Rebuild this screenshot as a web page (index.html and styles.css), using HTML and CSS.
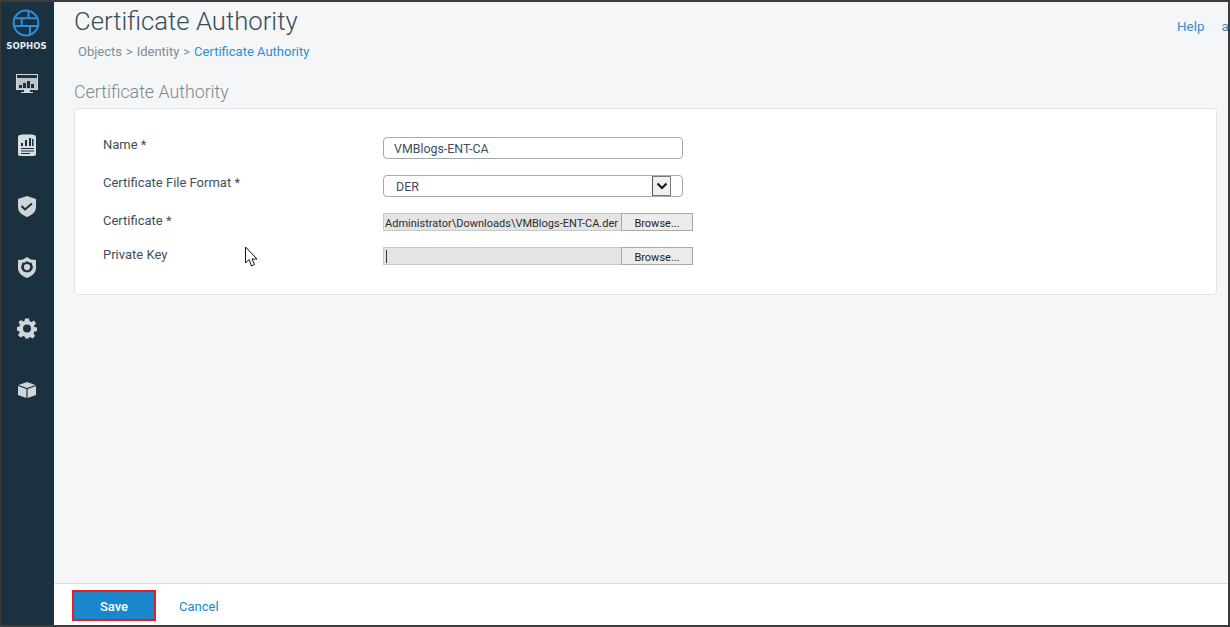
FILE: index.html
```html
<!DOCTYPE html>
<html lang="en">
<head>
<meta charset="utf-8">
<title>Certificate Authority</title>
<link rel="stylesheet" href="styles.css">
</head>
<body>
<div class="app">
  <nav class="sidebar">
    <div class="logo">
      <svg class="logo-mark" width="28" height="28" viewBox="0 0 28 28" fill="none" stroke="#2a8fd6" stroke-width="2">
        <circle cx="14" cy="14" r="12.4"/>
        <path d="M3.500 9.300H24.500M2.500 17H25.500M16.500 1.800V9.300M9.700 9.300V17M18 17V26"/>
      </svg>
      <span class="logo-text">SOPHOS</span>
    </div>
    <div class="nav-icon nav-monitor">
      <svg width="22" height="20" viewBox="0 0 22 20"><path fill="#d3d8dc" d="M0 0H22V16H0Z"/><path fill="#1a3240" d="M1 1H21V4H1Z"/><path fill="#bcc3c8" d="M1 4H21V15H1Z"/><path fill="#1a3240" d="M3 11h3v3H3zM7 9h3v5H7zM11 7h3v7h-3zM15 10h3v4h-3z"/><path fill="#d3d8dc" d="M8 16h6v2h3v1H5v-1h3z"/></svg>
    </div>
    <div class="nav-icon nav-report">
      <svg width="18" height="22" viewBox="0 0 18 22"><path fill="#7f8d96" d="M3 0H15V2H3Z"/><rect fill="#d9dde0" y="1" width="18" height="21" rx="2"/><path fill="#1a3240" d="M3 9h2v3H3zM7 6h2v6H7zM11 4h2v8h-2zM14 5h1.500v7H14zM3 14h13v1H3zM3 16.500h13v1H3zM3 19h9v1H3z"/></svg>
    </div>
    <div class="nav-icon nav-shield">
      <svg width="18" height="21" viewBox="0 0 18 21"><path fill="#cfd5d9" d="M9 0l9 3v8c0 5-4 8-9 10C4 19 0 16 0 11V3z"/><path fill="none" stroke="#1a3240" stroke-width="2" d="M3.500 10l3.500 3.500L14 7.500"/></svg>
    </div>
    <div class="nav-icon nav-protect">
      <svg width="18" height="21" viewBox="0 0 18 21"><path fill="#cfd5d9" d="M9 0l4 2.500 5 .5v8c0 5-4 8-9 10C4 19 0 16 0 11V3l5-.5z"/><path fill="#1a3240" fill-rule="evenodd" d="M9 4l2 1.500 2.500.3.800 2.200L15 10.500l-1 2.300-1.500 1.700L9 15.500l-3.500-1L4 12.800l-1-2.300.7-2.500.8-2.200L7 5.500zM9 7a3 3 0 1 0 0 6.200A3 3 0 0 0 9 7z"/></svg>
    </div>
    <div class="nav-icon nav-gear">
      <svg width="20" height="21" viewBox="0 0 20 20"><path fill="#cfd5d9" fill-rule="evenodd" d="M8 0h4l.6 2.800 1.900.8L17 2l2 3-2 2 .4 1.500L20 9v3.500l-2.600.6-.7 1.800L18 17.500 15.500 20l-2.300-1.600-1.300.6L11.500 20h-3l-.6-1.800-1.700-.6L3.500 19 1 16.500l1.700-2.300-.7-1.500L0 12V8.500l2.400-.6.600-1.700L1.500 3.500 4 1.500l2.200 1.600 1.300-.5zM10 6a4 4 0 1 0 0 8 4 4 0 0 0 0-8z"/></svg>
    </div>
    <div class="nav-icon nav-box">
      <svg width="18" height="16" viewBox="0 0 18 16"><path fill="#cfd5d9" d="M9 0l8.500 3L9 6 .5 3zM0 4l8.400 3v9L0 13zM18 4L9.600 7v9L18 13z"/></svg>
    </div>
  </nav>
  <main class="main">
    <div class="content">
      <header class="page-head">
        <div>
          <h1 class="page-title">Certificate Authority</h1>
          <div class="crumbs">Objects &gt; Identity &gt; <a class="crumb-current">Certificate Authority</a></div>
        </div>
        <div class="top-links"><a>Help</a><a>admin</a></div>
      </header>
      <h2 class="section-title">Certificate Authority</h2>
      <section class="card">
        <div class="row row-name">
          <label class="label">Name *</label>
          <div class="text-input">VMBlogs-ENT-CA</div>
        </div>
        <div class="row row-format">
          <label class="label">Certificate File Format *</label>
          <div class="select-input"><span>DER</span>
            <span class="select-arrow"><svg width="12" height="8" viewBox="0 0 12 8" fill="none" stroke="#111" stroke-width="2"><path d="M1.500 1.500L6 6l4.500-4.500"/></svg></span>
          </div>
        </div>
        <div class="row row-cert">
          <label class="label">Certificate *</label>
          <div class="file-input"><span class="file-path">Administrator\Downloads\VMBlogs-ENT-CA.der</span><span class="browse">Browse...</span></div>
        </div>
        <div class="row row-key">
          <label class="label">Private Key</label>
          <div class="file-input"><span class="file-path file-empty"><i class="caret"></i></span><span class="browse">Browse...</span></div>
        </div>
      </section>
      <svg class="cursor" width="14" height="22" viewBox="0 0 14 22"><path fill="#fff" stroke="#111" stroke-width="1" d="M1.500 1v16l3.500-3.500L7.500 20l3-1.500L8 13h5z"/></svg>
    </div>
    <footer class="footer">
      <button class="save" type="button">Save</button>
      <a class="cancel">Cancel</a>
    </footer>
  </main>
</div>
</body>
</html>
```
FILE: styles.css
```css
* { box-sizing: border-box; }
html, body { margin: 0; height: 100%; }
body { font-family: Roboto, "Liberation Sans", sans-serif; font-size: 13px; color: #3f4f5a; overflow: hidden; }
.app { display: flex; width: 1230px; height: 627px; border: solid #3c3c3c; border-width: 2px; border-left-width: 1px; background: #f4f6f8; position: relative; }
.sidebar { width: 53px; flex: none; background: #1a3240; display: flex; flex-direction: column; align-items: center; padding: 7px 1px 0 0; }
.logo { display: flex; flex-direction: column; align-items: center; height: 50px; margin-left: -1px; }
.logo-mark { display: block; margin-left: -1px; }
.logo-text { font-family: "DejaVu Sans", sans-serif; font-size: 8.500px; font-weight: 700; color: #e8ecef; margin-top: 4px; letter-spacing: 0.100px; line-height: 11px; }
.nav-icon { display: flex; justify-content: center; align-items: center; }
.nav-monitor { height: 20px; margin-top: 15px; }
.nav-report { height: 22px; margin-top: 40px; }
.nav-shield { height: 21px; margin-top: 40px; }
.nav-protect { height: 21px; margin-top: 40px; }
.nav-gear { height: 21px; margin-top: 40px; }
.nav-box { height: 16px; margin-top: 43px; }
.main { flex: 1; min-width: 0; display: flex; flex-direction: column; }
.content { flex: 1; position: relative; padding: 0 36px 0 20px; overflow: hidden; }
.page-head { display: flex; justify-content: space-between; height: 72px; }
.page-title { margin: 3px 0 0; font-size: 25.700px; font-weight: 300; line-height: 32px; color: #3b4d59; }
.crumbs { margin: 7px 0 0 4px; color: #808c95; line-height: 16px; word-spacing: 0.700px; }
.crumb-current { color: #2f8fd0; word-spacing: 0; }
.top-links { display: flex; gap: 17px; color: #2f8fd0; padding-top: 16px; width: 51px; margin-right: -36px; white-space: nowrap; overflow: hidden; flex: none; line-height: 18px; font-size: 13.400px; }
.section-title { margin: 7px 0 0; font-size: 17.800px; font-weight: 300; line-height: 22px; color: #7d8992; }
.card { margin-top: 5px; height: 187px; width: 1143px; background: #fff; border: 1px solid #e1e4e7; border-radius: 4px; padding: 28px 0 0 28px; position: relative; }
.row { display: flex; align-items: flex-start; }
.label { width: 280px; flex: none; color: #3f4f5a; line-height: 14px; margin-top: 1px; }
.text-input, .select-input { width: 300px; height: 22px; border: 1px solid #a4a9ad; border-radius: 4px; background: #fff; color: #3f4f5a; line-height: 22px; padding-left: 10px; font-size: 12.400px; }
.row-name { height: 38px; }
.row-format { height: 38px; }
.row-cert { height: 34px; }
.select-input { display: flex; justify-content: space-between; padding-left: 12px; padding-right: 11px; }
.select-arrow { width: 19px; height: 20px; border: 1px solid #7a7a7a; border-left-color: #555; background: #f0f0f0; display: flex; align-items: center; justify-content: center; }
.file-input { display: flex; width: 310px; height: 18px; }
.file-path { width: 238px; height: 18px; background: #e4e4e4; border: 1px solid #c9c9c9; border-right: none; font-size: 11px; color: #2d2d2d; line-height: 19px; padding-left: 1px; white-space: nowrap; overflow: hidden; }
.file-empty { display: flex; align-items: center; padding-left: 2px; }
.caret { display: block; width: 1px; height: 13px; background: #333; }
.browse { width: 72px; height: 18px; background: #ececec; border: 1px solid #a8a8a8; font-size: 11px; color: #222; line-height: 19px; text-align: center; }
.cursor { position: absolute; left: 190px; top: 244px; }
.footer { flex: none; height: 42px; background: #fff; border-top: 1px solid #dcdfe2; display: flex; align-items: center; padding: 2px 0 0 18px; }
.save { width: 84px; height: 31px; background: #1a87cc; border: 2px solid #ea1c24; color: #fff; font: 500 13px Roboto, sans-serif; padding: 1px 0 0; }
.cancel { margin-left: 23px; color: #1a87cc; padding-top: 2px; }
```
